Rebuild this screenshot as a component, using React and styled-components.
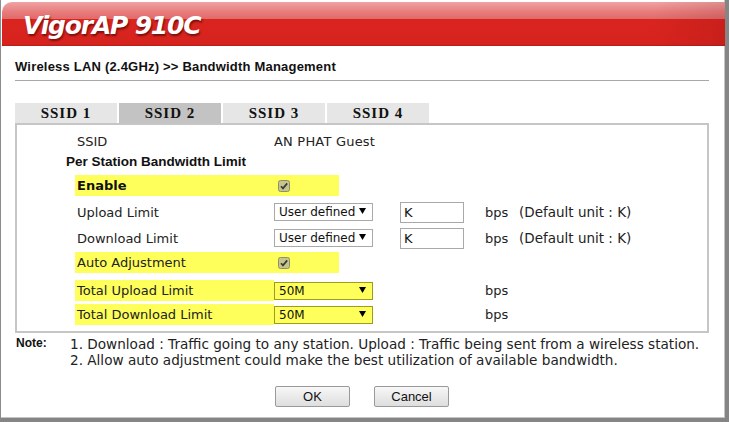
import styled, { createGlobalStyle } from "styled-components"

const GlobalStyle = createGlobalStyle`
  html, body {
    margin: 0;
    padding: 0;
    background: #ffffff;
  }
  * {
    box-sizing: border-box;
  }
`

const SANS = `"Liberation Sans", Arial, sans-serif`
const VERD = `"DejaVu Sans", Verdana, sans-serif`

export default function App() {
  const tabs = ["SSID 1", "SSID 2", "SSID 3", "SSID 4"]

  return (
    <Frame>
      <GlobalStyle />
      <Header>
        <Title>VigorAP 910C</Title>
      </Header>

      <Crumb>Wireless LAN (2.4GHz) &gt;&gt; Bandwidth Management</Crumb>
      <Rule />

      <Tabs>
        {tabs.map((t, i) => <Tab active={i === 1} key={t}>{t}</Tab>)}
      </Tabs>

      <Panel>
        <Row h={20} mt={6}>
          <Label>SSID</Label>
          <Value>AN PHAT Guest</Value>
        </Row>
        <Row h={20} mt={0}>
          <Section>Per Station Bandwidth Limit</Section>
        </Row>

        {/* Enable */}
        <Row h={21} mt={4}>
          <Label hl bold>Enable</Label>
          <Cell w={65} hl><Check /></Cell>
        </Row>

        <Row h={26} mt={3}>
          <Label>Upload Limit</Label>
          <Cell w={126}><Select value="User defined" /></Cell>
          <Cell w={85}><TextBox>K</TextBox></Cell>
          <Unit>bps</Unit>
          <Hint>(Default unit : K)</Hint>
        </Row>
        <Row h={26} mt={0}>
          <Label>Download Limit</Label>
          <Cell w={126}><Select value="User defined" /></Cell>
          <Cell w={85}><TextBox>K</TextBox></Cell>
          <Unit>bps</Unit>
          <Hint>(Default unit : K)</Hint>
        </Row>

        <Row h={21} mt={1}>
          <Label hl>Auto Adjustment</Label>
          <Cell w={65} hl><Check /></Cell>
        </Row>

        <Row h={21} mt={7}>
          <Label hl>Total Upload Limit</Label>
          <Cell w={211}><Select value="50M" hl /></Cell>
          <Unit>bps</Unit>
        </Row>
        <Row h={21} mt={3}>
          <Label hl>Total Download Limit</Label>
          <Cell w={211}><Select value="50M" hl /></Cell>
          <Unit>bps</Unit>
        </Row>
      </Panel>

      <Notes>
        <NoteTitle>Note:</NoteTitle>
        <NoteList>
          <p>1. Download : Traffic going to any station. Upload : Traffic being sent from a wireless station.</p>
          <p>2. Allow auto adjustment could make the best utilization of available bandwidth.</p>
        </NoteList>
      </Notes>

      <Actions>
        <Button>OK</Button>
        <Button>Cancel</Button>
      </Actions>
    </Frame>
  )
}

function Check() {
  return (
    <svg width="12" height="12" viewBox="0 0 12 12">
      <rect x="0.5" y="0.5" width="11" height="11" rx="2" fill="#c6c68a" stroke="#8e8e6a" />
      <path d="M3 6.2 L5 8.4 L9.2 3.4" fill="none" stroke="#3a3a3a" strokeWidth="1.7" />
    </svg>
  )
}

function Select({ value, hl }) {
  return (
    <SelectBox hl={hl}>
      <span>{value}</span>
      <svg width="7" height="6" viewBox="0 0 7 6">
        <polygon points="0,0 7,0 3.5,6" fill="#000" />
      </svg>
    </SelectBox>
  )
}

const Frame = styled.div`
  width: 729px;
  height: 422px;
  border-left: 1px solid #8c8c8c;
  border-right: 4px solid #858585;
  border-bottom: 4px solid #858585;
  box-shadow: inset -1px -1px 0 #c4c4c4;
  overflow: hidden;
  padding-top: 2px;
`
const Header = styled.div`
  height: 44px;
  margin-left: 1px;
  border-top-left-radius: 10px;
  background:
    linear-gradient(to right, rgba(0, 0, 0, 0) 90%, rgba(90, 0, 0, 0.12) 100%),
    linear-gradient(to bottom, #f0a3a3 0px, #e77c7c 10px, #e06a68 17px, #d9241f 17px, #d7231e 42px, #b51d19 44px);
  display: flex;
  align-items: center;
  padding-left: 21px;
`
const Title = styled.h1`
  margin: 0 0 -2px 0;
  font-family: ${VERD};
  font-style: italic;
  font-weight: bold;
  font-size: 25px;
  letter-spacing: -1.2px;
  color: #ffffff;
  text-shadow: 1px 2px 2px rgba(60, 0, 0, 0.6);
`
const Crumb = styled.div`
  margin: 13px 0 0 14px;
  font-family: ${SANS};
  font-weight: bold;
  font-size: 13px;
  letter-spacing: 0.2px;
  line-height: 16px;
  color: #111;
`
const Rule = styled.div`
  margin: 5px 0 0 14px;
  width: 694px;
  border-top: 1px solid #a8a8a8;
`
const Tabs = styled.div`
  display: flex;
  gap: 2px;
  margin: 22px 0 0 14px;
`
const Tab = styled.div`
  width: 102px;
  height: 20px;
  display: flex;
  justify-content: center;
  align-items: center;
  background: ${props => props.active ? "#c3c3c3" : "#e6e6e6"};
  font-family: "Liberation Serif", "Times New Roman", serif;
  font-weight: bold;
  font-size: 15px;
  letter-spacing: 1px;
  color: #111;
`
const Panel = styled.div`
  margin-left: 14px;
  width: 694px;
  height: 210px;
  border: 2px solid #c6c6c6;
  padding-left: 58px;
`
const Row = styled.div`
  display: flex;
  align-items: center;
  height: ${props => props.h}px;
  margin-top: ${props => props.mt}px;
  font-family: ${VERD};
  font-size: 13px;
  color: #222;
  white-space: nowrap;
`
const Label = styled.div`
  width: 199px;
  height: 100%;
  display: flex;
  align-items: center;
  padding-left: 2px;
  background: ${props => props.hl ? "#ffff5c" : "transparent"};
  font-weight: ${props => props.bold ? "bold" : "normal"};
  color: ${props => props.bold ? "#111" : "#222"};
`
const Value = styled.div`
  letter-spacing: 0.2px;
`
const Section = styled.div`
  margin-left: -9px;
  font-family: ${SANS};
  font-weight: bold;
  font-size: 13.5px;
  color: #111;
`
const Cell = styled.div`
  width: ${props => props.w}px;
  height: 100%;
  display: flex;
  align-items: center;
  padding-left: ${props => props.hl ? "4px" : "0"};
  background: ${props => props.hl ? "#ffff5c" : "transparent"};
`
const SelectBox = styled.div`
  width: 99px;
  height: 18px;
  display: flex;
  align-items: center;
  justify-content: space-between;
  padding: 0 6px 0 4px;
  background: ${props => props.hl ? "#ffff5c" : "#ffffff"};
  border: 1px solid ${props => props.hl ? "#9c9c1e" : "#a9a9a9"};
  font-family: ${VERD};
  font-size: 12px;
  color: #111;
  white-space: nowrap;
  svg {
    margin-top: -2px;
  }
`
const TextBox = styled.div`
  width: 64px;
  height: 21px;
  display: flex;
  align-items: center;
  padding-left: 3px;
  border: 1px solid #a9a9a9;
  font-family: ${VERD};
  font-size: 13px;
  color: #111;
`
const Unit = styled.div`
  width: 34px;
`
const Hint = styled.div`
  font-size: 13.5px;
  color: #222;
`
const Notes = styled.div`
  display: flex;
  margin: 3px 0 0 15px;
`
const NoteTitle = styled.div`
  width: 54px;
  font-family: ${SANS};
  font-weight: bold;
  font-size: 12px;
  line-height: 14px;
  color: #111;
`
const NoteList = styled.div`
  font-family: ${VERD};
  font-size: 13.6px;
  line-height: 16px;
  color: #222;
  white-space: nowrap;
  p {
    margin: 0;
  }
`
const Actions = styled.div`
  display: flex;
  justify-content: center;
  gap: 24px;
  margin-top: 18px;
  padding-right: 2px;
`
const Button = styled.button`
  width: 75px;
  height: 21px;
  padding: 0;
  background: linear-gradient(to bottom, #f7f7f7, #dedede);
  border: 1px solid #9a9a9a;
  border-radius: 2px;
  font-family: ${SANS};
  font-size: 13px;
  color: #111;
`
